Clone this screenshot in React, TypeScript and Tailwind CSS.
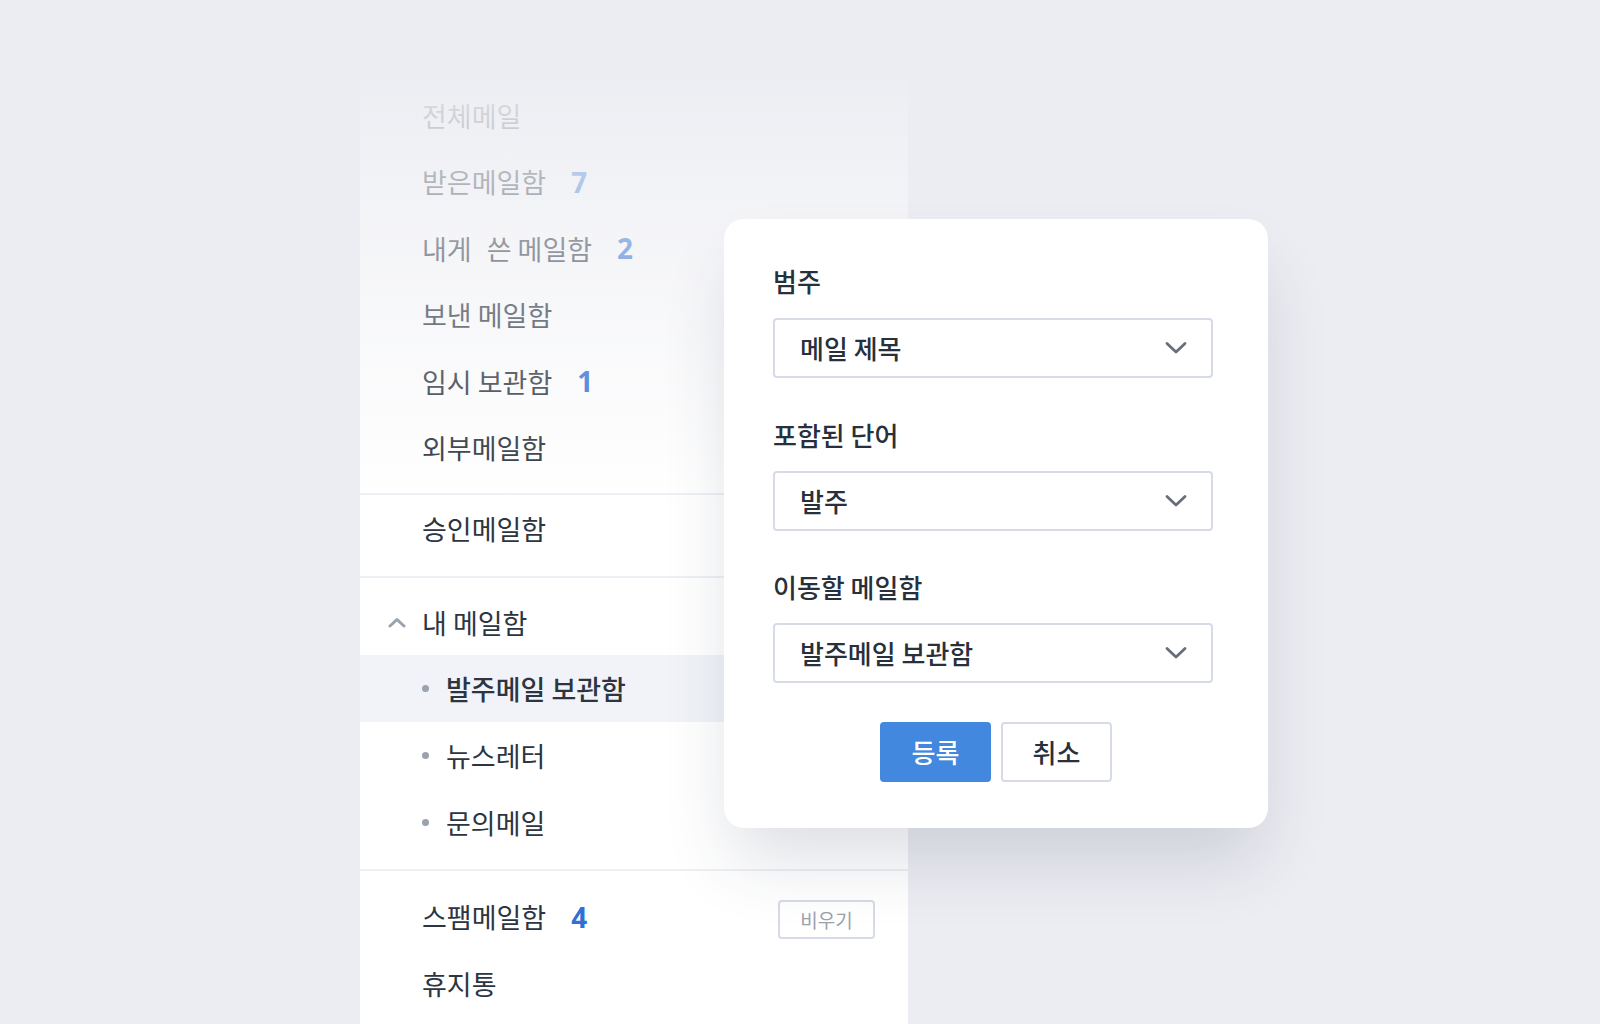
import React from "react";

const FONT = '"Noto Sans CJK KR", "Noto Sans", sans-serif';

function Count({ n }: { n: string }) {
  return (
    <span
      className="ml-[25px] text-[28px] font-bold text-[#2f70d6] leading-none"
      style={{ fontFamily: '"Noto Sans", "Noto Sans CJK KR", sans-serif' }}
    >
      {n}
    </span>
  );
}

function Row({ label, count, className = "" }: { label: React.ReactNode; count?: string; className?: string }) {
  return (
    <div className={`flex h-[66.5px] items-center pl-[62px] ${className}`}>
      <span className="text-[27px] text-[#2c3540] leading-none">{label}</span>
      {count && <Count n={count} />}
    </div>
  );
}

function SubRow({ label, active = false }: { label: string; active?: boolean }) {
  return (
    <div className={`flex h-[67px] items-center pl-[62px] ${active ? "bg-[#f1f3f8]" : ""}`}>
      <span className="h-[7px] w-[7px] rounded-full bg-[#9aa2ae]" />
      <span
        className={`ml-[17px] text-[27px] leading-none text-[#2c3540] ${active ? "font-medium" : ""}`}
      >
        {label}
      </span>
    </div>
  );
}

function Divider() {
  return <div className="h-[2px] w-full bg-[#eef0f5]" />;
}

function Chevron() {
  return (
    <svg width="22" height="14" viewBox="0 0 22 14" fill="none">
      <path d="M2 2.5 L11 11 L20 2.5" stroke="#676f7c" strokeWidth="2.8" strokeLinecap="round" strokeLinejoin="round" />
    </svg>
  );
}

function Select({ value }: { value: string }) {
  return (
    <div className="ml-[49px] flex h-[60px] w-[440px] items-center justify-between rounded-[4px] border-2 border-[#d7dbe7] bg-white pl-[25px] pr-[24px]">
      <span className="text-[26px] font-medium text-[#27303b] leading-none">{value}</span>
      <Chevron />
    </div>
  );
}

function Label({ text, className = "" }: { text: string; className?: string }) {
  return (
    <div className={`ml-[49px] flex h-[30px] items-center ${className}`}>
      <span className="text-[26px] font-medium text-[#27303b] leading-none">{text}</span>
    </div>
  );
}

export default function App() {
  return (
    <div className="relative h-[1024px] w-full overflow-hidden bg-[#ecedf2]" style={{ fontFamily: FONT }}>
      <div className="pl-[360px] pt-[80px]">
        <aside className="relative h-[944px] w-[548px] bg-white">
          <div className="pt-[2px] pb-[12px]">
            <Row label="전체메일" />
            <Row label="받은메일함" count="7" />
            <Row
              label={
                <>
                  내게<span className="ml-[15px]">쓴 메일함</span>
                </>
              }
              count="2"
            />
            <Row label="보낸 메일함" />
            <Row label="임시 보관함" count="1" />
            <Row label="외부메일함" />
          </div>
          <Divider />
          <div className="pt-0 pb-[14px]">
            <Row label="승인메일함" className="h-[67px]" />
          </div>
          <Divider />
          <div className="pt-[11px] pb-[13px]">
            <div className="flex h-[66px] items-center pl-[28px]">
              <svg width="18" height="11" viewBox="0 0 18 11" fill="none">
                <path d="M2 9 L9 2.5 L16 9" stroke="#9aa2ae" strokeWidth="3" strokeLinecap="round" strokeLinejoin="round" />
              </svg>
              <span className="ml-[16px] text-[27px] text-[#2c3540] leading-none">내 메일함</span>
            </div>
            <SubRow label="발주메일 보관함" active />
            <SubRow label="뉴스레터" />
            <SubRow label="문의메일" />
          </div>
          <Divider />
          <div className="pt-[12px]">
            <div className="flex h-[67px] items-center justify-between pl-[62px] pr-[33px]">
              <div className="flex items-center">
                <span className="text-[27px] text-[#2c3540] leading-none">스팸메일함</span>
                <Count n="4" />
              </div>
              <button className="mt-[5px] flex h-[39px] w-[97px] items-center justify-center rounded-[4px] border-2 border-[#d7dbe7] bg-white text-[19px] text-[#9ba2ad] leading-none">
                비우기
              </button>
            </div>
            <Row label="휴지통" />
          </div>
          <div className="pointer-events-none absolute inset-x-0 top-0 h-[420px] bg-linear-to-b from-[#ecedf2f0] via-[#ecedf270] to-[#ecedf200]" />
        </aside>
      </div>

      <div className="absolute left-[724px] top-[219px] h-[609px] w-[544px] rounded-[20px] bg-white pt-[47px] shadow-[0_40px_70px_-10px_rgba(40,50,80,0.16)]">
        <Label text="범주" />
        <div className="mt-[22px]">
          <Select value="메일 제목" />
        </div>
        <Label text="포함된 단어" className="mt-[42px]" />
        <div className="mt-[21px]">
          <Select value="발주" />
        </div>
        <Label text="이동할 메일함" className="mt-[41px]" />
        <div className="mt-[21px]">
          <Select value="발주메일 보관함" />
        </div>
        <div className="mt-[39px] flex justify-center gap-[10px]">
          <button className="flex h-[60px] w-[111px] items-center justify-center rounded-[4px] bg-[#4288df] text-[26px] font-medium text-white leading-none">
            등록
          </button>
          <button className="flex h-[60px] w-[111px] items-center justify-center rounded-[4px] border-2 border-[#d7dbe7] bg-white text-[26px] font-medium text-[#27303b] leading-none">
            취소
          </button>
        </div>
      </div>
    </div>
  );
}
